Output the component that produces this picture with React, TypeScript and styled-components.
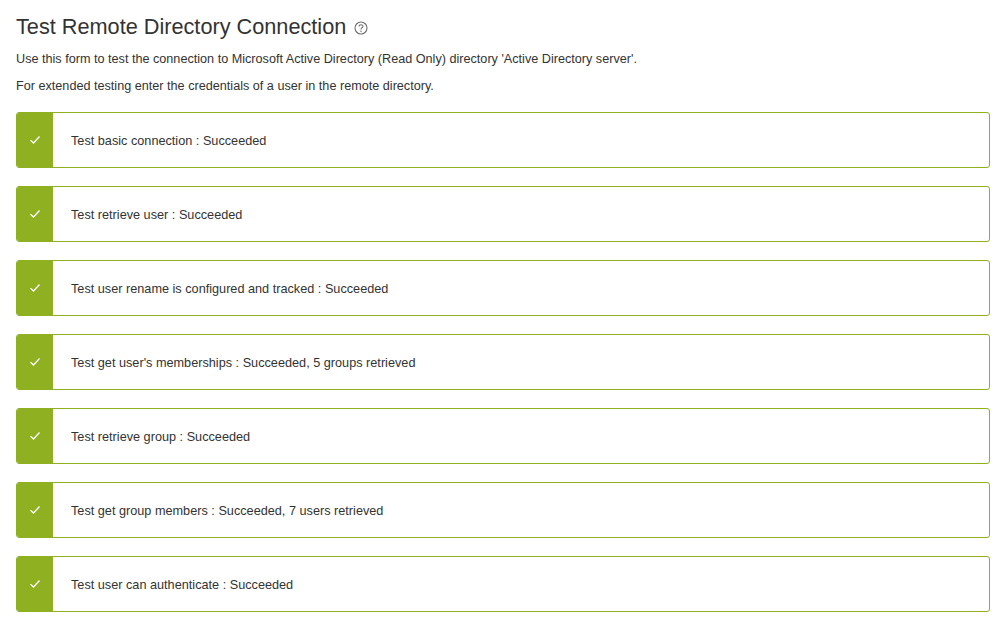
import React from 'react';
import styled, { createGlobalStyle } from 'styled-components';

const GlobalStyle = createGlobalStyle`
  html, body {
    margin: 0;
    padding: 0;
    background: #ffffff;
    font-family: "Liberation Sans", Arial, Helvetica, sans-serif;
    color: #333333;
  }
`;

const Page = styled.div`
  padding: 12px 9px 0 16px;
`;

const Title = styled.h1`
  display: flex;
  align-items: center;
  gap: 8px;
  margin: 0;
  font-size: 21.7px;
  font-weight: 400;
  line-height: 30px;
  color: #333333;
`;

const HelpIcon = styled.svg`
  width: 14px;
  height: 14px;
  margin-top: 2px;
`;

const Intro = styled.p<{ $top: number }>`
  margin: 0;
  font-size: 12.65px;
  line-height: 16px;
  color: #333333;
  padding-top: ${(p) => p.$top}px;
`;

const ResultList = styled.div`
  display: flex;
  flex-direction: column;
  gap: 18px;
  margin-top: 18px;
`;

const ResultRow = styled.div`
  display: flex;
  align-items: stretch;
  height: 56px;
  box-sizing: border-box;
  border: 1px solid #8eb021;
  border-radius: 3px;
  overflow: hidden;
  background: #ffffff;
`;

const StatusBlock = styled.div`
  width: 36px;
  flex: none;
  display: flex;
  align-items: center;
  justify-content: center;
  background: #8eb021;
`;

const Message = styled.div`
  display: flex;
  align-items: center;
  padding: 2px 0 0 18px;
  font-size: 12.7px;
  color: #333333;
`;

const Check = () => (
  <svg width="12" height="10" viewBox="0 0 12 10">
    <path d="M1.5 5.2 L4.5 8 L10.5 1.5" fill="none" stroke="#ffffff" strokeWidth="1.3" />
  </svg>
);

const results = [
  'Test basic connection : Succeeded',
  'Test retrieve user : Succeeded',
  'Test user rename is configured and tracked : Succeeded',
  "Test get user's memberships : Succeeded, 5 groups retrieved",
  'Test retrieve group : Succeeded',
  'Test get group members : Succeeded, 7 users retrieved',
  'Test user can authenticate : Succeeded',
];

export default function App() {
  return (
    <Page>
      <GlobalStyle />
      <Title>
        Test Remote Directory Connection
        <HelpIcon viewBox="0 0 14 14">
          <circle cx="7" cy="7" r="6" fill="none" stroke="#707070" strokeWidth="1.1" />
          <path d="M5 5.4 C5 3.2 9 3.2 9 5.3 C9 6.7 7 6.7 7 8.4" fill="none" stroke="#707070" strokeWidth="1.1" />
          <circle cx="7" cy="10.3" r="0.75" fill="#707070" />
        </HelpIcon>
      </Title>
      <Intro $top={9}>
        Use this form to test the connection to Microsoft Active Directory (Read Only) directory 'Active Directory server'.
      </Intro>
      <Intro $top={11}>For extended testing enter the credentials of a user in the remote directory.</Intro>
      <ResultList>
        {results.map((r) => (
          <ResultRow key={r}>
            <StatusBlock>
              <Check />
            </StatusBlock>
            <Message>{r}</Message>
          </ResultRow>
        ))}
      </ResultList>
    </Page>
  );
}
